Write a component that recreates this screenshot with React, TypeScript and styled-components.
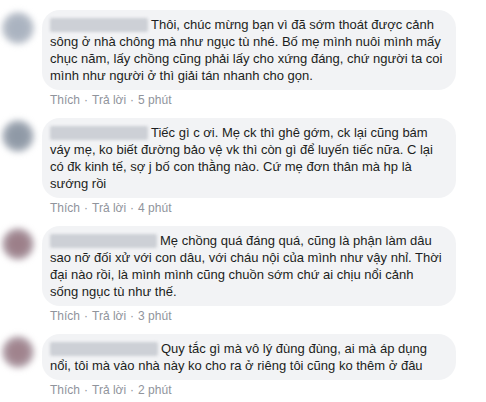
import styled, { createGlobalStyle } from 'styled-components'

const GlobalStyle = createGlobalStyle`
  body {
    margin: 0;
    background: #fff;
    font-family: 'Liberation Sans', Arial, sans-serif;
  }
`

type CommentData = {
  nameWidth: number
  avatar: string
  text: string
  time: string
}

const comments: CommentData[] = [
  {
    nameWidth: 98,
    avatar: '#aab3c0',
    text: 'Thôi, chúc mừng bạn vì đã sớm thoát được cảnh sông ở nhà chông mà như ngục tù nhé. Bố mẹ mình nuôi mình mấy chục năm, lấy chồng cũng phải lấy cho xứng đáng, chứ người ta coi mình như người ở thì giải tán nhanh cho gọn.',
    time: '5 phút',
  },
  {
    nameWidth: 98,
    avatar: '#8f99a6',
    text: 'Tiếc gì c ơi. Mẹ ck thì ghê gớm, ck lại cũng bám váy mẹ, ko biết đường bảo vệ vk thì còn gì để luyến tiếc nữa. C lại có đk kinh tế, sợ j bố con thằng nào. Cứ mẹ đơn thân mà hp là sướng rồi',
    time: '4 phút',
  },
  {
    nameWidth: 107,
    avatar: '#9c7f89',
    text: 'Mẹ chồng quá đáng quá, cũng là phận làm dâu sao nỡ đối xử với con dâu, với cháu nội của mình như vậy nhỉ. Thời đại nào rồi, là mình mình cũng chuồn sớm chứ ai chịu nổi cảnh sống ngục tù như thế.',
    time: '3 phút',
  },
  {
    nameWidth: 108,
    avatar: '#a0838d',
    text: 'Quy tắc gì mà vô lý đùng đùng, ai mà áp dụng nổi, tôi mà vào nhà này ko cho ra ở riêng tôi cũng ko thêm ở đâu',
    time: '2 phút',
  },
]

const List = styled.div`
  padding: 10px 0 0 0;
  width: 486px;
`

const Row = styled.div`
  display: flex;
  align-items: flex-start;
  margin-bottom: 10px;
`

const Avatar = styled.div<{ $tone: string }>`
  flex: none;
  width: 32px;
  height: 32px;
  margin: 2px 8px 0 2px;
  border-radius: 50%;
  background: radial-gradient(circle at 50% 50%, ${(p) => p.$tone} 0%, ${(p) => p.$tone} 35%, #d3d6dc 100%);
  filter: blur(3px);
`

const Body = styled.div`
  display: flex;
  flex-direction: column;
`

const Bubble = styled.div`
  box-sizing: border-box;
  width: 414px;
  padding: 6px 12px 6px 8px;
  background: #f2f3f5;
  border-radius: 18px;
  color: #1c1e21;
  font-size: 13px;
  line-height: 17px;
`

const Name = styled.span<{ $w: number }>`
  display: inline-block;
  width: ${(p) => p.$w}px;
  height: 14px;
  margin-right: 3px;
  vertical-align: -3px;
  background: #cdd0d6;
  border-radius: 2px;
  filter: blur(1.5px);
`

const Actions = styled.div`
  margin: 2px 0 0 8px;
  font-size: 12px;
  line-height: 16px;
  color: #90949c;
`

const Dot = styled.span`
  margin: 0 4px;
`

export default function App() {
  return (
    <List>
      <GlobalStyle />
      {comments.map((c, i) => (
        <Row key={i}>
          <Avatar $tone={c.avatar} />
          <Body>
            <Bubble>
              <Name $w={c.nameWidth} />
              {c.text}
            </Bubble>
            <Actions>
              Thích<Dot>·</Dot>Trả lời<Dot>·</Dot>{c.time}
            </Actions>
          </Body>
        </Row>
      ))}
    </List>
  )
}
